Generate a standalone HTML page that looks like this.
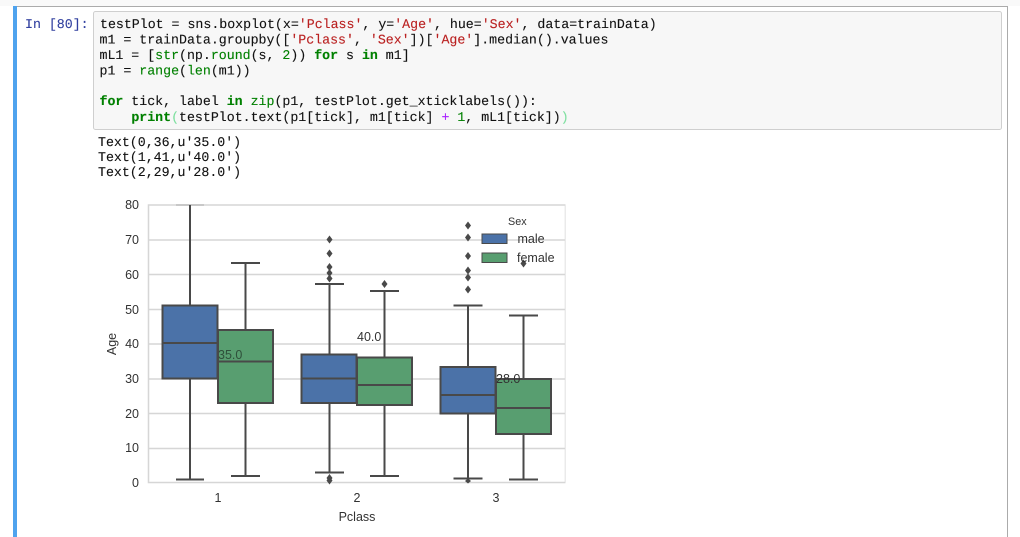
<!DOCTYPE html>
<html><head><meta charset="utf-8">
<style>
html,body{margin:0;padding:0;background:#fff;width:1020px;height:537px;overflow:hidden}
svg{display:block;position:absolute;left:0;top:0}
.c{font-family:"Liberation Mono",monospace;font-size:13.26px;fill:#111;white-space:pre;text-rendering:geometricPrecision;stroke:#111;stroke-width:.12px}
.k{fill:#008000;stroke:#008000;font-weight:bold}.b{fill:#008000;stroke:#008000}.s{fill:#BA2121;stroke:#BA2121}.o{fill:#AA22FF;stroke:#AA22FF}.n{fill:#008000;stroke:#008000}
.p{font-family:"Liberation Sans",sans-serif;font-size:12.5px;fill:#333}
</style></head><body>
<svg width="1020" height="537" viewBox="0 0 1020 537" xmlns="http://www.w3.org/2000/svg">
<defs><filter id="bl" x="0" y="0" width="100%" height="100%"><feGaussianBlur stdDeviation="0.35"/></filter></defs>
<rect x="0" y="0" width="1020" height="6" fill="#f9f9f9"/>
<path d="M13.5 537V6.5H1007.5V537" fill="none" stroke="#ababab" stroke-width="1"/>
<rect x="13" y="6" width="4" height="531" fill="#4fa3ee"/>
<rect x="93.5" y="11.5" width="908" height="118" rx="2" fill="#f7f7f7" stroke="#cfcfcf"/>
<text class="c" x="25" y="28" style="fill:#303F9F;stroke:#303F9F">In [80]:</text>
<text class="c" x="100" y="28" xml:space="preserve">testPlot = sns.boxplot(x=<tspan class="s">'Pclass'</tspan>, y=<tspan class="s">'Age'</tspan>, hue=<tspan class="s">'Sex'</tspan>, data=trainData)</text>
<text class="c" x="99.5" y="43.5" xml:space="preserve">m1 = trainData.groupby([<tspan class="s">'Pclass'</tspan>, <tspan class="s">'Sex'</tspan>])[<tspan class="s">'Age'</tspan>].median().values</text>
<text class="c" x="99.5" y="59" xml:space="preserve">mL1 = [<tspan class="b">str</tspan>(np.<tspan class="b">round</tspan>(s, <tspan class="n">2</tspan>)) <tspan class="k">for</tspan> s <tspan class="k">in</tspan> m1]</text>
<text class="c" x="99.5" y="74.5" xml:space="preserve">p1 = <tspan class="b">range</tspan>(<tspan class="b">len</tspan>(m1))</text>
<text class="c" x="99.5" y="105" xml:space="preserve"><tspan class="k">for</tspan> tick, label <tspan class="k">in</tspan> <tspan class="b">zip</tspan>(p1, testPlot.get_xticklabels()):</text>
<text class="c" x="99.5" y="121" xml:space="preserve">    <tspan class="k">print</tspan><tspan style="fill:#7fe0a0;stroke:#7fe0a0">(</tspan>testPlot.text(p1[tick], m1[tick] <tspan class="o">+</tspan> <tspan class="n">1</tspan>, mL1[tick])<tspan style="fill:#7fe0a0;stroke:#7fe0a0">)</tspan></text>
<text class="c" x="98" y="146">Text(0,36,u'35.0')</text>
<text class="c" x="98" y="161">Text(1,41,u'40.0')</text>
<text class="c" x="98" y="176">Text(2,29,u'28.0')</text>

<g filter="url(#bl)">
<!-- plot grid -->
<g stroke="#d6d6d6" stroke-width="1.5" fill="none">
<path d="M148.5 240H565.5M148.5 274.5H565.5M148.5 309.5H565.5M148.5 344H565.5M148.5 379H565.5M148.5 413.5H565.5M148.5 448.5H565.5"/>
<rect x="148.5" y="205" width="417" height="277.5"/>
</g>
<path d="M176 205H204" stroke="#bdbdbd" stroke-width="1.5"/>
<!-- whiskers -->
<g stroke="#484848" stroke-width="2" fill="none">
<path d="M190 205V305.5M190 378.5V479.5M176 479.5H204"/>
<path d="M245.5 263V330M231 263H260M245.5 403V476M231 476H260"/>
<path d="M329.5 284V354.5M315 284H344M329.5 403V472.5M315 472.5H344"/>
<path d="M384.5 291V357.5M370 291H399M384.5 405V476M370 476H399"/>
<path d="M468 305.5V367M453.5 305.5H482.5M468 413.5V478.5M453.5 478.5H482.5"/>
<path d="M523.5 315.5V379M509 315.5H538M523.5 434V479.5M509 479.5H538"/>
</g>
<!-- boxes -->
<g stroke="#484848" stroke-width="2">
<rect x="162.5" y="305.5" width="55" height="73" fill="#4c72a8"/>
<path d="M162.5 343H217.5" fill="none"/>
<rect x="218" y="330" width="55" height="73" fill="#589e6f"/>
<path d="M218 361.5H273" fill="none"/>
<rect x="301.5" y="354.5" width="55" height="48.5" fill="#4c72a8"/>
<path d="M301.5 378.5H356.5" fill="none"/>
<rect x="357" y="357.5" width="55" height="47.5" fill="#589e6f"/>
<path d="M357 385H412" fill="none"/>
<rect x="440.5" y="367" width="55" height="46.5" fill="#4c72a8"/>
<path d="M440.5 395H495.5" fill="none"/>
<rect x="496" y="379" width="55" height="55" fill="#589e6f"/>
<path d="M496 408H551" fill="none"/>
</g>
<!-- fliers -->
<g fill="#484848">
<path d="M329.5 235.5l3 4-3 4-3-4z"/>
<path d="M329.5 249.5l3 4-3 4-3-4z"/>
<path d="M329.5 263l3 4-3 4-3-4z"/>
<path d="M329.5 269l3 4-3 4-3-4z"/>
<path d="M329.5 274.5l3 4-3 4-3-4z"/>
<path d="M329.5 474l3 4-3 4-3-4z"/>
<path d="M329.5 476.5l3 4-3 4-3-4z"/>
<path d="M384.5 280l3 4-3 4-3-4z"/>
<path d="M468 221.5l3 4-3 4-3-4z"/>
<path d="M468 233.5l3 4-3 4-3-4z"/>
<path d="M468 252l3 4-3 4-3-4z"/>
<path d="M468 266.5l3 4-3 4-3-4z"/>
<path d="M468 273.5l3 4-3 4-3-4z"/>
<path d="M468 285.5l3 4-3 4-3-4z"/>
<path d="M468 478.5l3 2.5-3 2.5-3-2.5z"/>
<path d="M523.5 259.5l3 4-3 4-3-4z"/>
</g>
<!-- annotations -->
<text class="p" x="218" y="359" style="fill:#2f4f3a">35.0</text>
<text class="p" x="357" y="341">40.0</text>
<text class="p" x="496" y="383">28.0</text>
<!-- y ticks -->
<g class="p" text-anchor="end">
<text x="139" y="209">80</text>
<text x="139" y="244">70</text>
<text x="139" y="279">60</text>
<text x="139" y="314">50</text>
<text x="139" y="348">40</text>
<text x="139" y="383">30</text>
<text x="139" y="418">20</text>
<text x="139" y="452">10</text>
<text x="139" y="487">0</text>
</g>
<g class="p" text-anchor="middle">
<text x="218" y="502">1</text>
<text x="357" y="502">2</text>
<text x="496" y="502">3</text>
<text x="357" y="521">Pclass</text>
<text transform="translate(116,344) rotate(-90)">Age</text>
</g>
<!-- legend -->
<text class="p" x="508" y="225" style="font-size:10.8px">Sex</text>
<rect x="482" y="234" width="25" height="9.5" fill="#4c72a8" stroke="#484848"/>
<rect x="482" y="253" width="25" height="9.5" fill="#589e6f" stroke="#484848"/>
<text class="p" x="517.5" y="243">male</text>
<text class="p" x="517" y="262">female</text>
</g>
</svg>
</body></html>
